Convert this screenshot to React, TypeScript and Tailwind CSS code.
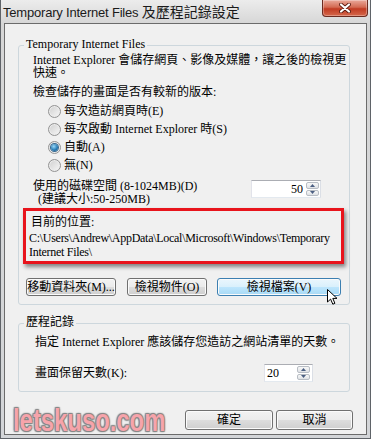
import React from 'react';

const serif = "font-['Liberation_Serif','Noto_Sans_CJK_TC',serif]";

function Radio({ checked = false }: { checked?: boolean }) {
    return (
        <span className="w-[13px] h-[13px] shrink-0 rounded-full border border-[#939393] bg-[linear-gradient(135deg,#cfcfcf,#f7f7f7)] shadow-[inset_0_0_0_1px_#ececec] flex items-center justify-center">
            {checked && (
                <span className="w-[7px] h-[7px] rounded-full bg-[radial-gradient(circle_at_40%_35%,#9ad8f8,#2a7fb8_55%,#0f4c80)] shadow-[0_0_0_1px_#3a6a90]" />
            )}
        </span>
    );
}

function SpinArrows({ className = '' }: { className?: string }) {
    return (
        <div className={`flex flex-col gap-[1px] py-[1px] ${className}`}>
            <div className="flex-1 rounded-[2px] border border-[#b8bdc4] bg-[linear-gradient(#f8f8f8,#dfe2e6)] flex items-center justify-center">
                <svg width="5" height="3" viewBox="0 0 5 3">
                    <path d="M0 3 L2.5 0 L5 3 Z" fill="#4b5f82" />
                </svg>
            </div>
            <div className="flex-1 rounded-[2px] border border-[#b8bdc4] bg-[linear-gradient(#f8f8f8,#dfe2e6)] flex items-center justify-center">
                <svg width="5" height="3" viewBox="0 0 5 3">
                    <path d="M0 0 L2.5 3 L5 0 Z" fill="#4b5f82" />
                </svg>
            </div>
        </div>
    );
}

function Button({ children, className = '', hot = false }: { children: React.ReactNode; className?: string; hot?: boolean }) {
    return (
        <div
            className={`rounded-[3px] border flex items-center justify-center whitespace-nowrap text-[12px] leading-none shadow-[inset_0_0_0_1px_#fbfbfb] ${
                hot
                    ? 'border-[#3c7fb1] bg-[linear-gradient(#eaf6fd_0%,#d9f0fc_50%,#bee6fd_50%,#a7d9f5_100%)]'
                    : 'border-[#707070] bg-[linear-gradient(#f2f2f2_0%,#ebebeb_50%,#dddddd_50%,#cfcfcf_100%)]'
            } ${className}`}
        >
            {children}
        </div>
    );
}

export default function App() {
    return (
        <div className="relative w-[371px] h-[439px] flex flex-col px-[3px] pb-[4px] border-x border-b border-[#5f6368] bg-[linear-gradient(#ececec,#d6d6d6_24px,#d3d5d8)] text-black overflow-hidden">
            {/* Title bar */}
            <div className="h-[23px] shrink-0 flex items-start justify-between">
                <div className="-ml-[1px] leading-[22px] text-[#1a1a1a] whitespace-nowrap">
                    <span className="font-['Liberation_Sans',sans-serif] text-[13px] tracking-[-0.2px]">Temporary Internet Files </span>
                    <span className="font-['Noto_Sans_CJK_TC',sans-serif] text-[14px]">及歷程記錄設定</span>
                </div>
                <div className="-mr-[1px] w-[46px] h-[17px] rounded-b-[4px] border border-t-0 border-[#6b2b20] bg-[linear-gradient(#eaa99a,#d36a52_45%,#c13b22_55%,#d5684b)] shadow-[inset_0_0_0_1px_rgba(255,255,255,0.3)] flex items-center justify-center">
                    <svg width="12" height="10" viewBox="0 0 12 10">
                        <path d="M2 1.5 L10 8.5 M10 1.5 L2 8.5" stroke="#5a1a10" strokeWidth="3.8" strokeLinecap="round" />
                        <path d="M2 1.5 L10 8.5 M10 1.5 L2 8.5" stroke="#fff" strokeWidth="2.2" strokeLinecap="round" />
                    </svg>
                </div>
            </div>

            {/* Client area */}
            <div className={`flex-1 flex flex-col border border-[#6b6b6b] bg-[#f0f0f0] text-[12px] ${serif}`}>
                {/* Temporary Internet Files group */}
                <fieldset className="ml-[13px] mt-[13px] w-[332px] rounded-[3px] border border-[#cdd7dd] pb-[8px]">
                    <legend className="ml-[5px] px-[2px] leading-[14px] pb-[3px]">Temporary Internet Files</legend>
                    <div className="pl-[14px] leading-[13px]">
                        <div>Internet Explorer 會儲存網頁、影像及媒體，讓之後的檢視更</div>
                        <div>快速。</div>
                    </div>
                    <div className="pl-[14px] mt-[6px] leading-[12px]">檢查儲存的畫面是否有較新的版本:</div>
                    <div className="mt-[4px] pl-[29px] flex flex-col">
                        <div className="h-[18px] flex items-center gap-[3px]">
                            <Radio />
                            <span>每次造訪網頁時(E)</span>
                        </div>
                        <div className="h-[18px] flex items-center gap-[3px]">
                            <Radio />
                            <span>每次啟動 Internet Explorer 時(S)</span>
                        </div>
                        <div className="h-[18px] flex items-center gap-[3px]">
                            <Radio checked />
                            <span>自動(A)</span>
                        </div>
                        <div className="h-[18px] flex items-center gap-[3px]">
                            <Radio />
                            <span>無(N)</span>
                        </div>
                    </div>
                    <div className="mt-[6px] pl-[14px] flex items-start">
                        <div className="w-[218px] leading-[13px]">
                            <div>使用的磁碟空間 (8-1024MB)(D)</div>
                            <div className="pl-[5px]">(建議大小:50-250MB)</div>
                        </div>
                        <div className="w-[70px] h-[18px] flex border border-[#abadb3] border-l-[#e2e3ea] border-r-[#dbdfe6] border-b-[#e3e9ef] bg-white">
                            <div className="flex-1 pr-[3px] text-right leading-[16px]">50</div>
                            <SpinArrows className="w-[13px] mr-[1px]" />
                        </div>
                    </div>

                    {/* Highlighted location */}
                    <div className="mt-[2px] ml-[4px] w-[321px] h-[56px] border-[3px] border-[#e8141c] shadow-[2px_3px_4px_rgba(0,0,0,0.45)] pt-[5px] pl-[3px] pb-[2px]">
                        <div className="ml-[2px] leading-[12px]">目前的位置:</div>
                        <div className="mt-[3px] leading-[14px] whitespace-nowrap tracking-[-0.28px]">
                            {'C:\\Users\\Andrew\\AppData\\Local\\Microsoft\\Windows\\Temporary'}
                            <br />
                            {'Internet Files\\'}
                        </div>
                    </div>

                    <div className="mt-[14px] pl-[7px] flex">
                        <Button className="w-[90px] h-[18px]">移動資料夾(M)...</Button>
                        <Button className="ml-[11px] w-[80px] h-[18px]">檢視物件(O)</Button>
                        <Button hot className="ml-[10px] w-[124px] h-[18px]">檢視檔案(V)</Button>
                    </div>
                </fieldset>

                {/* History group */}
                <fieldset className="ml-[13px] mt-[10px] w-[332px] rounded-[3px] border border-[#cdd7dd] pb-[9px]">
                    <legend className="ml-[5px] px-[2px] leading-[14px] pb-[3px]">歷程記錄</legend>
                    <div className="mt-[4px] pl-[16px] leading-[12px]">指定 Internet Explorer 應該儲存您造訪之網站清單的天數。</div>
                    <div className="mt-[16px] pl-[16px] flex items-center">
                        <div className="w-[229px]">畫面保留天數(K):</div>
                        <div className="w-[49px] h-[18px] flex border border-[#abadb3] border-l-[#e2e3ea] border-r-[#dbdfe6] border-b-[#e3e9ef] bg-white">
                            <div className="flex-1 pl-[2px] leading-[16px]">20</div>
                            <SpinArrows className="w-[13px] mr-[2px]" />
                        </div>
                    </div>
                </fieldset>

                {/* Footer */}
                <div className="mt-[14px] pl-[8px] pr-[13px] flex items-center">
                    <div className="w-[152px] h-[28px] flex items-center">
                        <span className="inline-block origin-left scale-x-[0.745] font-['Liberation_Sans',sans-serif] font-bold text-[32px] leading-none text-[#f6a4ab] [text-shadow:0_0_1px_#777,1px_1px_1px_#888,-1px_-1px_1px_#888,1px_-1px_1px_#888,-1px_1px_1px_#888,0_0_3px_#999]">
                            letskuso.com
                        </span>
                    </div>
                    <div className="ml-auto flex gap-[3px]">
                        <Button className="w-[88px] h-[20px]">確定</Button>
                        <Button className="w-[77px] h-[20px]">取消</Button>
                    </div>
                </div>
            </div>

            {/* Mouse pointer */}
            <svg className="absolute left-[326px] top-[289px]" width="12" height="17" viewBox="0 0 12 17">
                <path d="M0.5 0.5 L0.5 13 L3.6 10.1 L5.8 15.2 L7.9 14.3 L5.8 9.4 L10 9.4 Z" fill="#fff" stroke="#000" strokeWidth="1" strokeLinejoin="round" />
            </svg>
        </div>
    );
}
